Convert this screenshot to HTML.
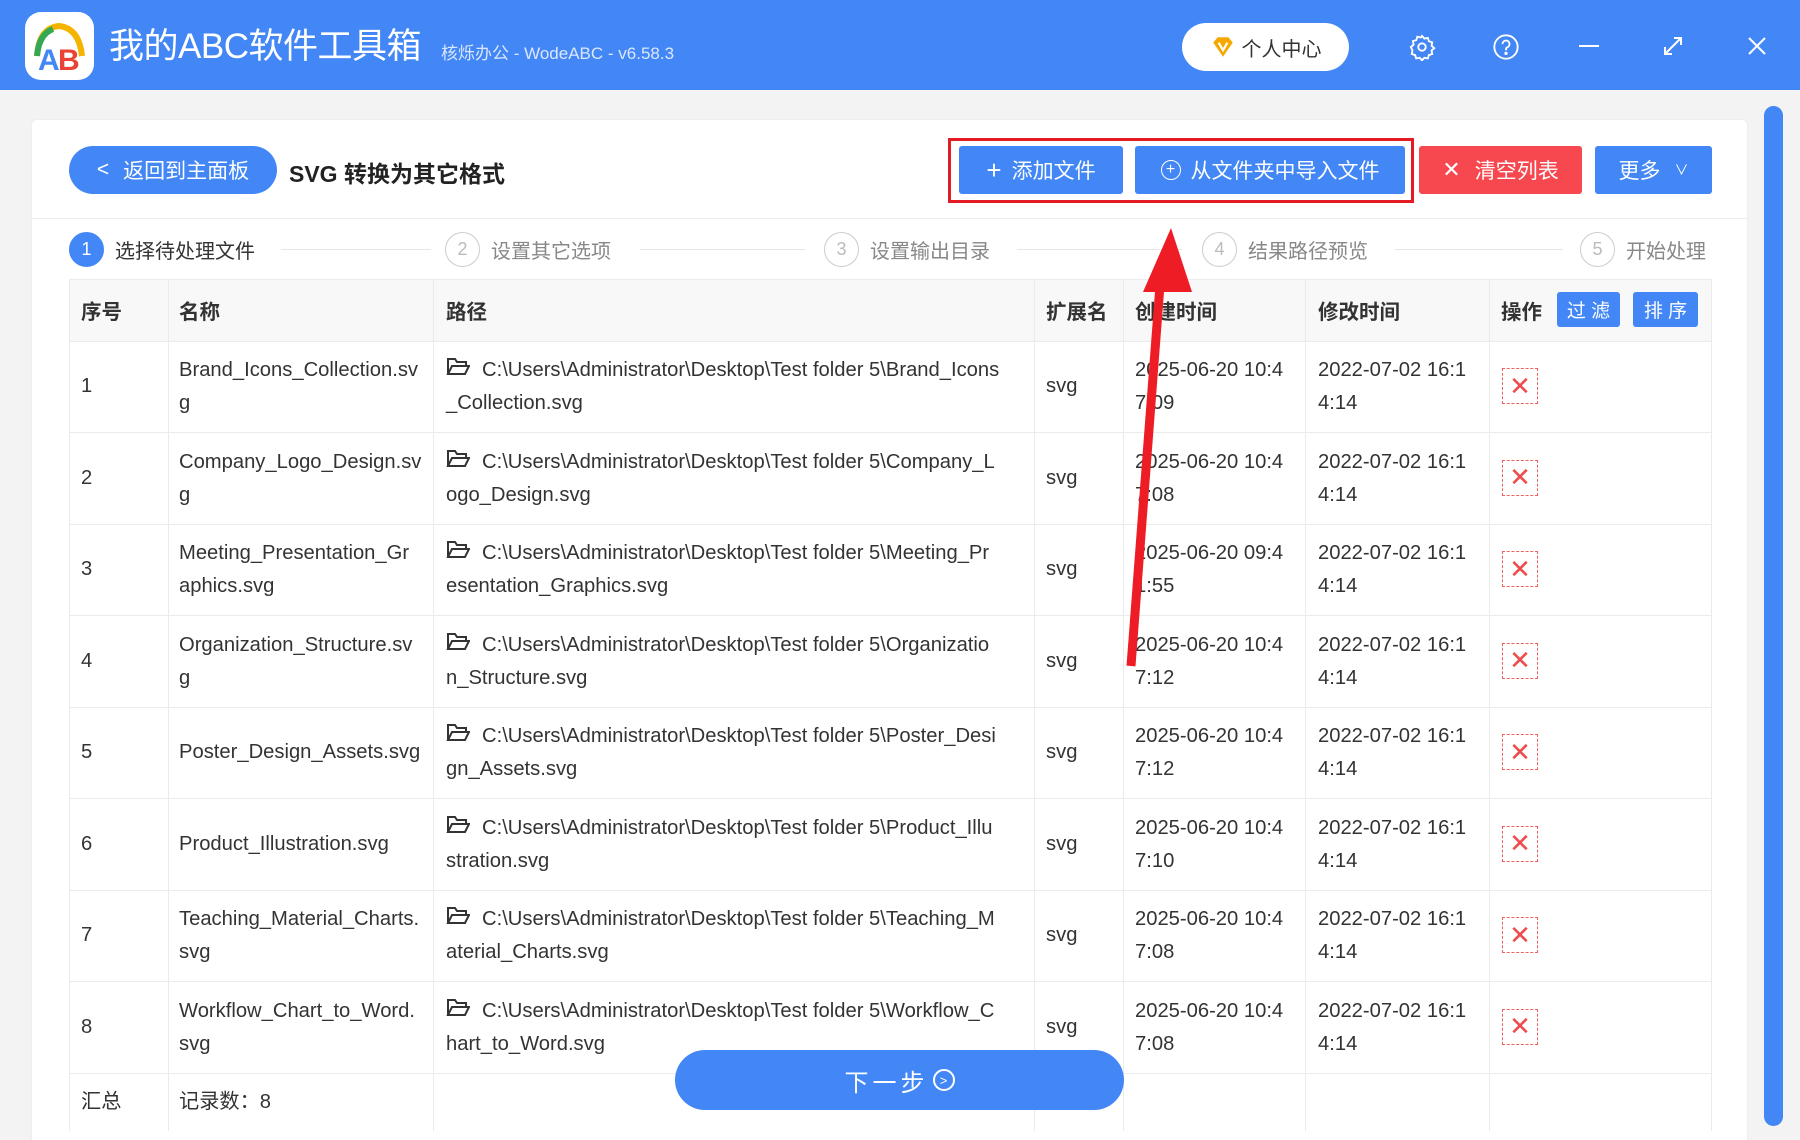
<!DOCTYPE html>
<html style="width:1800px;height:1140px;overflow:hidden"><head><meta charset="utf-8"><style>
*{margin:0;padding:0;box-sizing:border-box}
body{width:1800px;height:1140px;overflow:hidden;background:#f3f3f3;font-family:"Liberation Sans","Noto Sans CJK SC",sans-serif;position:relative;color:#333}
.a{position:absolute}
.hdr{left:0;top:0;width:1800px;height:90px;background:#4287f5}
.btn{position:absolute;color:#fff;font-size:21px;display:flex;align-items:center;justify-content:center;background:#4287f5;border-radius:3px}
.step{position:absolute;top:232px;height:35px;display:flex;align-items:center;font-size:20px;color:#888}
.circ{width:35px;height:35px;border-radius:50%;border:1.5px solid #ccc;display:flex;align-items:center;justify-content:center;font-size:18px;color:#bbb;margin-right:11px}
.sline{position:absolute;top:249px;height:1px;background:#e6e6e6}
.cell{position:absolute;font-size:20.2px;line-height:33px;color:#333}
.hl{position:absolute;height:1px;background:#ebebeb;left:69px;width:1642px}
.vl{position:absolute;width:1px;background:#ebebeb;top:279px;height:852px}
.th{position:absolute;top:279px;height:62px;display:flex;align-items:center;font-size:20.5px;font-weight:bold;color:#333}
.x{position:absolute;left:1502px;width:36px;height:36px;border:1px dashed #f06060;color:#f04a4a;font-size:26px;display:flex;align-items:center;justify-content:center}
</style></head><body>
<div class="a hdr"></div>
<div class="a" style="left:25px;top:12px;width:69px;height:68px;background:#fff;border-radius:16px"></div>
<svg class="a" style="left:25px;top:12px" width="69" height="68" viewBox="0 0 69 68">
<path d="M12 44 Q14 16 34 14 Q54 16 57 44" fill="none" stroke="#f5b400" stroke-width="6"/>
<path d="M12 44 Q14 22 28 17" fill="none" stroke="#34a853" stroke-width="6"/>
<text x="13" y="58" font-size="30" font-weight="bold" fill="#4287f5" font-family="Liberation Sans">A</text>
<text x="33" y="58" font-size="30" font-weight="bold" fill="#ea4335" font-family="Liberation Sans">B</text>
</svg>
<div class="a" style="left:109px;top:24px;font-size:35px;color:#fff;line-height:46px;letter-spacing:-0.5px">我的ABC软件工具箱</div>
<div class="a" style="left:441px;top:39px;font-size:17px;color:#dbe7fd">核烁办公 - WodeABC - v6.58.3</div>
<div class="a" style="left:1182px;top:23px;width:167px;height:48px;background:#fff;border-radius:24px;display:flex;align-items:center;justify-content:center;font-size:20px;color:#333">
<svg width="26" height="26" viewBox="0 0 24 24" style="margin-right:6px"><path d="M3 8l4-5h10l4 5-9 13z" fill="#f5a800"/><path d="M8 8l4 7 4-7" fill="none" stroke="#fff" stroke-width="2"/></svg>个人中心</div>
<svg class="a" style="left:1408px;top:33px" width="28" height="28" viewBox="0 0 24 24" fill="none" stroke="#fff" stroke-width="1.6"><circle cx="12" cy="12" r="3.2"/><path d="M12 2.5l2 2.3 3-.6.9 2.9 2.9.9-.6 3 2.3 2-2.3 2 .6 3-2.9.9-.9 2.9-3-.6-2 2.3-2-2.3-3 .6-.9-2.9-2.9-.9.6-3L2.5 12l2.3-2-.6-3 2.9-.9.9-2.9 3 .6z"/></svg>
<svg class="a" style="left:1492px;top:33px" width="28" height="28" viewBox="0 0 24 24" fill="none" stroke="#fff" stroke-width="1.6"><circle cx="12" cy="12" r="10"/><path d="M9 9.5a3 3 0 1 1 4 2.8c-.8.4-1 1-1 1.8v.8"/><circle cx="12" cy="17.5" r=".6" fill="#fff"/></svg>
<div class="a" style="left:1579px;top:45px;width:20px;height:2px;background:#fff"></div>
<svg class="a" style="left:1662px;top:35px" width="22" height="22" viewBox="0 0 22 22" stroke="#fff" stroke-width="2" fill="none"><path d="M3 19L19 3M12 3h7v7M3 12v7h7"/></svg>
<svg class="a" style="left:1747px;top:36px" width="20" height="20" viewBox="0 0 20 20" stroke="#fff" stroke-width="2"><path d="M2 2L18 18M18 2L2 18"/></svg>

<div class="a" style="left:31px;top:119px;width:1717px;height:1021px;background:#fff;border-radius:6px 6px 0 0;border:1px solid #eee;border-bottom:none"></div>
<div class="a" style="left:1764px;top:106px;width:19px;height:1020px;background:#4287f5;border-radius:10px"></div>

<div class="btn" style="left:69px;top:146px;width:208px;height:48px;border-radius:24px;font-size:21px"><span style="margin-right:14px">&lt;</span>返回到主面板</div>
<div class="a" style="left:289px;top:155px;font-size:23px;font-weight:bold;color:#222">SVG 转换为其它格式</div>
<div class="a" style="left:948px;top:138px;width:466px;height:65px;border:3px solid #e21b25"></div>
<div class="btn" style="left:959px;top:146px;width:164px;height:48px"><span style="font-size:26px;margin-right:10px;font-weight:300">+</span>添加文件</div>
<div class="btn" style="left:1135px;top:146px;width:270px;height:48px"><span style="display:inline-flex;width:20px;height:20px;border:1.5px solid #fff;border-radius:50%;align-items:center;justify-content:center;font-size:16px;margin-right:10px">+</span>从文件夹中导入文件</div>
<div class="btn" style="left:1419px;top:146px;width:163px;height:48px;background:#f7474f"><span style="font-size:22px;margin-right:14px">✕</span>清空列表</div>
<div class="btn" style="left:1595px;top:146px;width:117px;height:48px">更多<span style="font-size:14px;margin-left:14px">∨</span></div>
<div class="a" style="left:31px;top:218px;width:1717px;height:1px;background:#ececec"></div>

<div class="step" style="left:69px;color:#333"><div class="circ" style="background:#4287f5;border-color:#4287f5;color:#fff">1</div>选择待处理文件</div>
<div class="sline" style="left:281px;width:150px"></div>
<div class="step" style="left:445px"><div class="circ">2</div>设置其它选项</div>
<div class="sline" style="left:640px;width:165px"></div>
<div class="step" style="left:824px"><div class="circ">3</div>设置输出目录</div>
<div class="sline" style="left:1017px;width:165px"></div>
<div class="step" style="left:1202px"><div class="circ">4</div>结果路径预览</div>
<div class="sline" style="left:1395px;width:168px"></div>
<div class="step" style="left:1580px"><div class="circ">5</div>开始处理</div>

<div class="a" style="left:69px;top:279px;width:1642px;height:62px;background:#f8f8f8"></div>
<div class="hl" style="top:279px"></div>
<div class="hl" style="top:341px"></div><div class="hl" style="top:432px"></div><div class="hl" style="top:524px"></div><div class="hl" style="top:615px"></div><div class="hl" style="top:707px"></div><div class="hl" style="top:798px"></div><div class="hl" style="top:890px"></div><div class="hl" style="top:981px"></div><div class="hl" style="top:1073px"></div>
<div class="vl" style="left:69px"></div><div class="vl" style="left:168px"></div><div class="vl" style="left:433px"></div><div class="vl" style="left:1034px"></div><div class="vl" style="left:1123px"></div><div class="vl" style="left:1305px"></div><div class="vl" style="left:1489px"></div><div class="vl" style="left:1711px"></div>
<div class="th" style="left:81px">序号</div><div class="th" style="left:179px">名称</div><div class="th" style="left:446px">路径</div><div class="th" style="left:1046px">扩展名</div><div class="th" style="left:1135px">创建时间</div><div class="th" style="left:1318px">修改时间</div><div class="th" style="left:1501px">操作</div>
<div class="btn" style="left:1557px;top:292px;width:63px;height:35px;font-size:19px">过 滤</div>
<div class="btn" style="left:1633px;top:292px;width:65px;height:35px;font-size:19px">排 序</div>

<div id="rows"></div>
<script>
var d=[
["Brand_Icons_Collection.sv<br>g","Brand_Icons<br>_Collection.svg","2025-06-20 10:4<br>7:09"],
["Company_Logo_Design.sv<br>g","Company_L<br>ogo_Design.svg","2025-06-20 10:4<br>7:08"],
["Meeting_Presentation_Gr<br>aphics.svg","Meeting_Pr<br>esentation_Graphics.svg","2025-06-20 09:4<br>1:55"],
["Organization_Structure.sv<br>g","Organizatio<br>n_Structure.svg","2025-06-20 10:4<br>7:12"],
["Poster_Design_Assets.svg","Poster_Desi<br>gn_Assets.svg","2025-06-20 10:4<br>7:12"],
["Product_Illustration.svg","Product_Illu<br>stration.svg","2025-06-20 10:4<br>7:10"],
["Teaching_Material_Charts.<br>svg","Teaching_M<br>aterial_Charts.svg","2025-06-20 10:4<br>7:08"],
["Workflow_Chart_to_Word.<br>svg","Workflow_C<br>hart_to_Word.svg","2025-06-20 10:4<br>7:08"]];
var h="";
for(var i=0;i<8;i++){var t=341+i*91.5;var m=t+45;
var nm=d[i][0].indexOf("<br>")<0;
h+='<div class="cell" style="left:81px;top:'+(m-16)+'px">'+(i+1)+'</div>';
h+='<div class="cell" style="left:179px;top:'+(nm?m-16:t+13)+'px">'+d[i][0]+'</div>';
h+='<div class="cell" style="left:446px;top:'+(t+13)+'px"><svg width="24" height="20" viewBox="0 0 24 20" style="margin-right:12px;vertical-align:-1px" fill="none" stroke="#333" stroke-width="2"><path d="M2 17V2h7l2 3h9v4M2 17l4-8h17l-4 8z"/></svg>C:\\Users\\Administrator\\Desktop\\Test folder 5\\'+d[i][1]+'</div>';
h+='<div class="cell" style="left:1046px;top:'+(m-16)+'px">svg</div>';
h+='<div class="cell" style="left:1135px;top:'+(t+13)+'px">'+d[i][2]+'</div>';
h+='<div class="cell" style="left:1318px;top:'+(t+13)+'px">2022-07-02 16:1<br>4:14</div>';
h+='<div class="x" style="top:'+(m-18)+'px">✕</div>';}
document.getElementById("rows").innerHTML=h;
</script>
<div class="cell" style="left:81px;top:1086px">汇总</div>
<div class="cell" style="left:179px;top:1086px">记录数：8</div>

<div class="btn" style="left:675px;top:1050px;width:449px;height:60px;border-radius:30px;font-size:24px;letter-spacing:4px">下一步 <span style="display:inline-flex;width:22px;height:22px;border:2px solid #fff;border-radius:50%;align-items:center;justify-content:center;font-size:13px;letter-spacing:0;margin-left:4px">&gt;</span></div>

<svg class="a" style="left:0;top:0" width="1800" height="1140"><path d="M1131 666 L1160 285" stroke="#ee1c25" stroke-width="9"/><path d="M1171 228 L1143 292 L1192 292 Z" fill="#ee1c25"/></svg>
</body></html>
